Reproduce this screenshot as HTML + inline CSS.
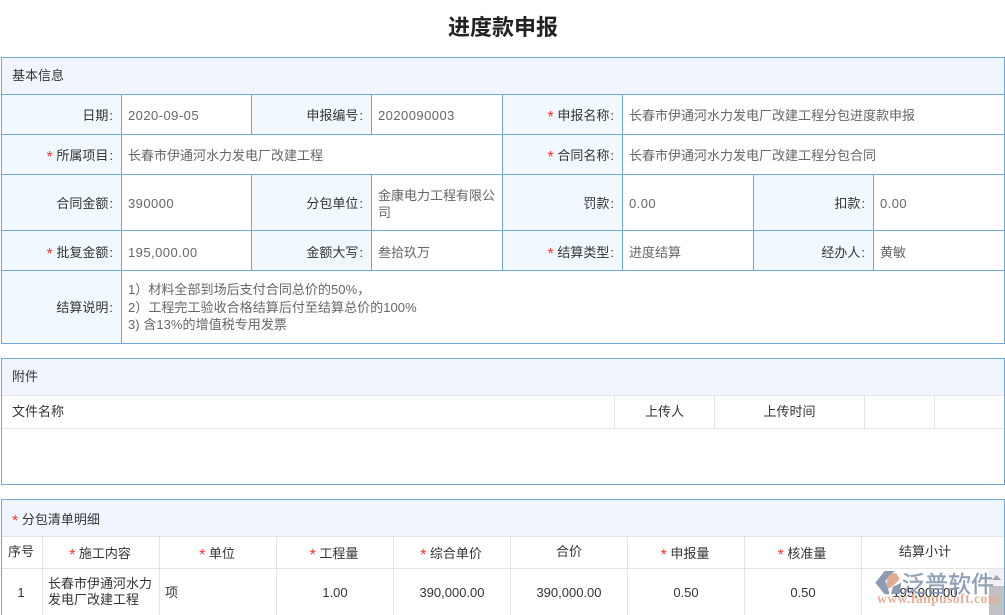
<!DOCTYPE html>
<html><head><meta charset="utf-8"><style>
html,body{margin:0;padding:0;background:#fff}
body{width:1005px;height:615px;position:relative;overflow:hidden;font:13px/18px "Liberation Sans","Noto Sans CJK SC",sans-serif;color:#333}
div{position:absolute;box-sizing:border-box}
.h{background:#6fa8dc;height:1px}.v{background:#6fa8dc;width:1px}
.gh{background:#e4e4e4;height:1px}.gv{background:#e4e4e4;width:1px}
.bg{background:#f1f8fe}.hd{background:#f1f6fe}
.t{white-space:nowrap;height:18px;margin-top:1px}
.l{text-align:right;color:#333;padding-right:2px}
.val{color:#666;letter-spacing:.45px}
.cj{letter-spacing:0}
.c{text-align:center}
i{font-style:normal;color:#f33;font-size:16px;line-height:0;position:relative;top:2px}
u{text-decoration:none;margin-left:1px}
</style></head><body>
<div class="t" style="left:.5px;width:1005px;top:12px;height:30px;text-align:center;font-size:22px;line-height:30px;font-weight:bold;color:#222">进度款申报</div>

<!-- section 1 backgrounds -->
<div class="hd" style="left:2px;top:58px;width:1002px;height:36px"></div>
<div class="bg" style="left:2px;top:95px;width:119px;height:248px"></div>
<div class="bg" style="left:252px;top:95px;width:119px;height:39px"></div>
<div class="bg" style="left:503px;top:95px;width:119px;height:175px"></div>
<div class="bg" style="left:252px;top:175px;width:119px;height:95px"></div>
<div class="bg" style="left:754px;top:175px;width:119px;height:95px"></div>
<div class="h" style="left:1px;top:57px;width:1004px"></div>
<div class="h" style="left:1px;top:94px;width:1004px"></div>
<div class="h" style="left:1px;top:134px;width:1004px"></div>
<div class="h" style="left:1px;top:174px;width:1004px"></div>
<div class="h" style="left:1px;top:230px;width:1004px"></div>
<div class="h" style="left:1px;top:270px;width:1004px"></div>
<div class="h" style="left:1px;top:343px;width:1004px"></div>
<div class="v" style="left:1px;top:57px;height:287px"></div>
<div class="v" style="left:1004px;top:57px;height:287px"></div>
<div class="v" style="left:121px;top:94px;height:250px"></div>
<div class="v" style="left:251px;top:94px;height:40px"></div>
<div class="v" style="left:251px;top:174px;height:96px"></div>
<div class="v" style="left:371px;top:94px;height:40px"></div>
<div class="v" style="left:371px;top:174px;height:96px"></div>
<div class="v" style="left:502px;top:94px;height:176px"></div>
<div class="v" style="left:622px;top:94px;height:176px"></div>
<div class="v" style="left:753px;top:174px;height:96px"></div>
<div class="v" style="left:873px;top:174px;height:96px"></div>

<div class="t" style="left:12px;top:66px">基本信息</div>
<div class="t l" style="left:2px;width:113px;top:106px">日期<u>:</u></div>
<div class="t val" style="left:128px;top:106px">2020-09-05</div>
<div class="t l" style="left:252px;width:113px;top:106px">申报编号<u>:</u></div>
<div class="t val" style="left:378px;top:106px">2020090003</div>
<div class="t l" style="left:503px;width:113px;top:106px"><i>*</i> 申报名称<u>:</u></div>
<div class="t val cj" style="left:629px;top:106px">长春市伊通河水力发电厂改建工程分包进度款申报</div>

<div class="t l" style="left:2px;width:113px;top:146px"><i>*</i> 所属项目<u>:</u></div>
<div class="t val cj" style="left:128px;top:146px">长春市伊通河水力发电厂改建工程</div>
<div class="t l" style="left:503px;width:113px;top:146px"><i>*</i> 合同名称<u>:</u></div>
<div class="t val cj" style="left:629px;top:146px">长春市伊通河水力发电厂改建工程分包合同</div>

<div class="t l" style="left:2px;width:113px;top:194px">合同金额<u>:</u></div>
<div class="t val" style="left:128px;top:194px">390000</div>
<div class="t l" style="left:252px;width:113px;top:194px">分包单位<u>:</u></div>
<div class="val cj" style="left:378px;top:187px;width:118px;line-height:17px">金康电力工程有限公司</div>
<div class="t l" style="left:503px;width:113px;top:194px">罚款<u>:</u></div>
<div class="t val" style="left:629px;top:194px">0.00</div>
<div class="t l" style="left:754px;width:113px;top:194px">扣款<u>:</u></div>
<div class="t val" style="left:880px;top:194px">0.00</div>

<div class="t l" style="left:2px;width:113px;top:243px"><i>*</i> 批复金额<u>:</u></div>
<div class="t val" style="left:128px;top:243px">195,000.00</div>
<div class="t l" style="left:252px;width:113px;top:243px">金额大写<u>:</u></div>
<div class="t val cj" style="left:378px;top:243px">叁拾玖万</div>
<div class="t l" style="left:503px;width:113px;top:243px"><i>*</i> 结算类型<u>:</u></div>
<div class="t val cj" style="left:629px;top:243px">进度结算</div>
<div class="t l" style="left:754px;width:113px;top:243px">经办人<u>:</u></div>
<div class="t val cj" style="left:880px;top:243px">黄敏</div>

<div class="t l" style="left:2px;width:113px;top:298px">结算说明<u>:</u></div>
<div class="t val" style="left:128px;top:280px;letter-spacing:.05px;white-space:pre;height:54px;line-height:17.5px">1）材料全部到场后支付合同总价的50%，
2）工程完工验收合格结算后付至结算总价的100%
3) 含13%的增值税专用发票</div>

<!-- section 2 -->
<div class="hd" style="left:2px;top:359px;width:1002px;height:36px"></div>
<div class="gh" style="left:2px;top:395px;width:1002px"></div>
<div class="gh" style="left:2px;top:428px;width:1002px"></div>
<div class="gv" style="left:614px;top:396px;height:32px"></div>
<div class="gv" style="left:714px;top:396px;height:32px"></div>
<div class="gv" style="left:864px;top:396px;height:32px"></div>
<div class="gv" style="left:934px;top:396px;height:32px"></div>
<div class="h" style="left:1px;top:358px;width:1004px"></div>
<div class="h" style="left:1px;top:484px;width:1004px"></div>
<div class="v" style="left:1px;top:358px;height:127px"></div>
<div class="v" style="left:1004px;top:358px;height:127px"></div>
<div class="t" style="left:12px;top:367px">附件</div>
<div class="t" style="left:12px;top:402px">文件名称</div>
<div class="t c" style="left:615px;width:99px;top:402px">上传人</div>
<div class="t c" style="left:715px;width:149px;top:402px">上传时间</div>

<!-- section 3 -->
<div class="hd" style="left:2px;top:500px;width:1002px;height:36px"></div>
<div class="gh" style="left:2px;top:536px;width:1002px"></div>
<div class="gh" style="left:2px;top:568px;width:1002px"></div>
<div class="gv" style="left:42px;top:537px;height:78px"></div>
<div class="gv" style="left:159px;top:537px;height:78px"></div>
<div class="gv" style="left:276px;top:537px;height:78px"></div>
<div class="gv" style="left:393px;top:537px;height:78px"></div>
<div class="gv" style="left:510px;top:537px;height:78px"></div>
<div class="gv" style="left:627px;top:537px;height:78px"></div>
<div class="gv" style="left:744px;top:537px;height:78px"></div>
<div class="gv" style="left:861px;top:537px;height:78px"></div>
<div class="h" style="left:1px;top:499px;width:1004px"></div>
<div class="v" style="left:1px;top:499px;height:116px"></div>
<div class="v" style="left:1004px;top:499px;height:116px"></div>
<div class="t" style="left:12px;top:510px"><i>*</i> 分包清单明细</div>

<div class="t c" style="left:1px;width:40px;top:542px">序号</div>
<div class="t c" style="left:42px;width:116px;top:544px"><i>*</i> 施工内容</div>
<div class="t c" style="left:159px;width:116px;top:544px"><i>*</i> 单位</div>
<div class="t c" style="left:276px;width:116px;top:544px"><i>*</i> 工程量</div>
<div class="t c" style="left:393px;width:116px;top:544px"><i>*</i> 综合单价</div>
<div class="t c" style="left:511px;width:116px;top:542px">合价</div>
<div class="t c" style="left:627px;width:116px;top:544px"><i>*</i> 申报量</div>
<div class="t c" style="left:744px;width:116px;top:544px"><i>*</i> 核准量</div>
<div class="t c" style="left:862px;width:126px;top:542px">结算小计</div>

<div class="t c" style="left:1px;width:40px;top:583px">1</div>
<div style="left:48px;top:576px;width:108px;line-height:16px">长春市伊通河水力发电厂改建工程</div>
<div class="t" style="left:165px;top:583px">项</div>
<div class="t c" style="left:277px;width:116px;top:583px">1.00</div>
<div class="t c" style="left:394px;width:116px;top:583px">390,000.00</div>
<div class="t c" style="left:511px;width:116px;top:583px">390,000.00</div>
<div class="t c" style="left:628px;width:116px;top:583px">0.50</div>
<div class="t c" style="left:745px;width:116px;top:583px">0.50</div>
<div class="t c" style="left:862px;width:126px;top:583px;color:#222">195,000.00</div>

<!-- scrollbar -->
<div style="left:989px;top:569px;width:15px;height:46px;background:#f1f1f1"></div>
<div style="left:989px;top:586px;width:15px;height:29px;background:#c1c1c1"></div>
<svg style="position:absolute;left:990px;top:574px" width="13" height="8"><path d="M6.5 1L11 6H2z" fill="#a3a3a3"/></svg>

<!-- watermark -->
<svg style="position:absolute;left:874px;top:569px" width="30" height="28" viewBox="0 0 30 28">
<path d="M1.3 13.7L10.7 2H20.7L11.3 12L15.7 25.3H10.7z" fill="#8b9ab3"/>
<path d="M12.3 15.3L14 7C17 4.500 20 4 22.300 4.300L25.700 10.300L19 17L14 20z" fill="#e3ab90"/>
<path d="M17.300 23.700L19 17.700L27.300 13.700L25.700 25H17z" fill="#8b9ab3"/>
</svg>
<div class="t" style="left:902px;top:569px;height:28px;font-size:23px;line-height:28px;color:#8796b0;opacity:.92;-webkit-text-stroke:.4px #8796b0">泛普软件</div>
<div class="t" style="left:877px;top:591px;height:14px;font:bold 13.5px/14px 'Liberation Serif',serif;letter-spacing:.5px;color:#e8a88e;opacity:.92">www.fanpusoft.com</div>
</body></html>
